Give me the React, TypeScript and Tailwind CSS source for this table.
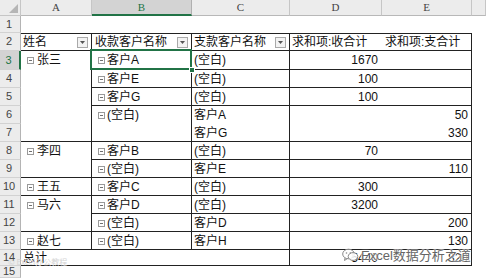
import React from "react";

const TXT = "font-['Liberation_Sans','Noto_Sans_CJK_SC',sans-serif] text-[12px] text-[#111]";

function Minus() {
  return (
    <svg width="7" height="7" viewBox="0 0 7 7" className="shrink-0">
      <rect x="0.5" y="0.5" width="6" height="6" fill="#fff" stroke="#9a9a9a" />
      <line x1="2" y1="3.5" x2="5" y2="3.5" stroke="#707070" />
    </svg>
  );
}

function Drop() {
  return (
    <span className="ml-auto mr-[3px] flex h-[11px] w-[11px] shrink-0 items-center justify-center border border-[#a9a9a9] bg-[#f3f3f3]">
      <svg width="5" height="3" viewBox="0 0 5 3">
        <path d="M0 0H5L2.5 3Z" fill="#555" />
      </svg>
    </span>
  );
}

const rowHeads = [
  { n: 1, c: "row-start-2" },
  { n: 2, c: "row-start-3" },
  { n: 3, c: "row-start-4" },
  { n: 4, c: "row-start-5" },
  { n: 5, c: "row-start-6" },
  { n: 6, c: "row-start-7" },
  { n: 7, c: "row-start-8" },
  { n: 8, c: "row-start-9" },
  { n: 9, c: "row-start-10" },
  { n: 10, c: "row-start-11" },
  { n: 11, c: "row-start-12" },
  { n: 12, c: "row-start-13" },
  { n: 13, c: "row-start-14" },
  { n: 14, c: "row-start-15" },
  { n: 15, c: "row-start-16" },
];

const colHeads = [
  { l: "A", c: "col-start-2" },
  { l: "B", c: "col-start-3", sel: true },
  { l: "C", c: "col-start-4" },
  { l: "D", c: "col-start-5" },
  { l: "E", c: "col-start-6" },
  { l: "", c: "col-start-7" },
];

const names = [
  { t: "张三", c: "row-start-4 row-span-5" },
  { t: "李四", c: "row-start-9 row-span-2" },
  { t: "王五", c: "row-start-11 row-span-1" },
  { t: "马六", c: "row-start-12 row-span-2" },
  { t: "赵七", c: "row-start-14 row-span-1" },
];

const groups = [
  { rc: "row-start-4 row-span-1", b: "客户A", c: ["(空白)"], d: ["1670"], e: [""], sel: true },
  { rc: "row-start-5 row-span-1", b: "客户E", c: ["(空白)"], d: ["100"], e: [""] },
  { rc: "row-start-6 row-span-1", b: "客户G", c: ["(空白)"], d: ["100"], e: [""] },
  { rc: "row-start-7 row-span-2", b: "(空白)", c: ["客户A", "客户G"], d: ["", ""], e: ["50", "330"] },
  { rc: "row-start-9 row-span-1", b: "客户B", c: ["(空白)"], d: ["70"], e: [""] },
  { rc: "row-start-10 row-span-1", b: "(空白)", c: ["客户E"], d: [""], e: ["110"] },
  { rc: "row-start-11 row-span-1", b: "客户C", c: ["(空白)"], d: ["300"], e: [""] },
  { rc: "row-start-12 row-span-1", b: "客户D", c: ["(空白)"], d: ["3200"], e: [""] },
  { rc: "row-start-13 row-span-1", b: "(空白)", c: ["客户D"], d: [""], e: ["200"] },
  { rc: "row-start-14 row-span-1", b: "(空白)", c: ["客户H"], d: [""], e: ["130"] },
];

export default function App() {
  return (
    <div className={`relative h-[278px] w-[486px] overflow-hidden bg-white ${TXT}`}>
      <div className="grid h-full grid-cols-[21px_71px_100px_98px_92px_90px_1fr] grid-rows-[16px_17px_18px_19px_18px_18px_18px_18px_18px_18px_18px_18px_18px_18px_16px_12px]">
        {/* corner */}
        <div className="col-start-1 row-start-1 flex items-end justify-end border-b border-r border-[#c6c6c6] bg-[#ececec] pb-[2px] pr-[2px]">
          <svg width="9" height="9" viewBox="0 0 9 9">
            <path d="M9 0V9H0Z" fill="#b5b5b5" />
          </svg>
        </div>
        {colHeads.map((h) => (
          <div
            key={h.c}
            className={`${h.c} row-start-1 flex items-center justify-center border-r font-['Liberation_Serif',serif] text-[11px] ${
              h.sel
                ? "border-r-[#b0b0b0] border-b-2 border-b-[#217346] bg-[#d3d3d3] text-[#217346]"
                : "border-r-[#c6c6c6] border-b border-b-[#b8b8b8] bg-[#ececec] text-[#444]"
            }`}
          >
            {h.l}
          </div>
        ))}
        {rowHeads.map((r) => (
          <div
            key={r.n}
            className={`col-start-1 ${r.c} flex items-center justify-center border-b border-b-[#d2d2d2] pr-[2px] font-['Liberation_Sans',sans-serif] text-[11px] ${
              r.n === 3
                ? "border-r-2 border-r-[#217346] bg-[#d3d3d3] text-[#217346]"
                : "border-r border-r-[#b4b4b4] bg-[#ececec] text-[#444]"
            }`}
          >
            {r.n}
          </div>
        ))}

        {/* header row of pivot */}
        <div className="col-start-2 row-start-3 flex items-center border-y border-r border-[#222] pl-[2px]">
          <span>姓名</span>
          <Drop />
        </div>
        <div className="col-start-3 row-start-3 flex items-center border-y border-r border-[#222] pl-[3px]">
          <span>收款客户名称</span>
          <Drop />
        </div>
        <div className="col-start-4 row-start-3 flex items-center border-y border-r border-[#222] pl-[2px]">
          <span>支款客户名称</span>
          <Drop />
        </div>
        <div className="col-start-5 row-start-3 flex items-center border-y border-[#222] pl-[2px]">
          求和项:收合计
        </div>
        <div className="col-start-6 row-start-3 flex items-center border-y border-r border-[#222] pl-[3px]">
          求和项:支合计
        </div>

        {/* names */}
        {names.map((n) => (
          <div key={n.t} className={`col-start-2 ${n.c} border-b border-r border-[#222] pl-[6px]`}>
            <div className="flex h-[18px] items-center gap-[3px]">
              <Minus />
              <span>{n.t}</span>
            </div>
          </div>
        ))}

        {groups.map((g, i) => (
          <React.Fragment key={i}>
            <div className={`col-start-3 ${g.rc} relative border-b border-r border-[#222] pl-[6px]`}>
              <div className="flex h-[18px] items-center gap-[2px]">
                <Minus />
                <span>{g.b}</span>
              </div>
              {g.sel && (
                <>
                  <div className="pointer-events-none absolute -bottom-[1px] -left-[2px] -right-[1px] -top-[2px] z-10 border-2 border-[#217346]" />
                  <div className="absolute -bottom-[4px] -right-[4px] z-20 h-[6px] w-[6px] border border-white bg-[#217346]" />
                </>
              )}
            </div>
            <div className={`col-start-4 ${g.rc} flex flex-col border-b border-r border-[#222] pl-[2px]`}>
              {g.c.map((t, j) => (
                <div key={j} className="flex flex-1 items-center">
                  {t}
                </div>
              ))}
            </div>
            <div className={`col-start-5 ${g.rc} flex flex-col border-b border-[#222] pr-[4px]`}>
              {g.d.map((t, j) => (
                <div key={j} className="flex flex-1 items-center justify-end">
                  {t}
                </div>
              ))}
            </div>
            <div className={`col-start-6 ${g.rc} flex flex-col border-b border-r border-[#222] pr-[3px]`}>
              {g.e.map((t, j) => (
                <div key={j} className="flex flex-1 items-center justify-end">
                  {t}
                </div>
              ))}
            </div>
          </React.Fragment>
        ))}

        {/* total */}
        <div className="col-span-3 col-start-2 row-start-15 flex items-center border-b border-r border-[#222] pl-[2px]">
          总计
        </div>
        <div className="col-start-5 row-start-15 flex items-center justify-end border-b border-[#222] pr-[4px]">
          5440
        </div>
        <div className="col-start-6 row-start-15 flex items-center justify-end border-b border-r border-[#222] pr-[3px]">
          820
        </div>
      </div>

      {/* watermark */}
      <div className="absolute left-[342px] top-[248px] flex items-center gap-[2px]">
        <svg width="17" height="14" viewBox="0 0 17 14">
          <ellipse cx="6.5" cy="6" rx="5.8" ry="4.8" fill="rgba(255,255,255,0.6)" stroke="#8a8a8a" />
          <path d="M3 10 L2.5 12.5 L5.5 10.5" fill="none" stroke="#8a8a8a" />
          <ellipse cx="11" cy="8.5" rx="4.8" ry="3.9" fill="rgba(255,255,255,0.85)" stroke="#8a8a8a" />
          <circle cx="4.5" cy="5" r="0.8" fill="#8a8a8a" />
          <circle cx="8.3" cy="5" r="0.8" fill="#8a8a8a" />
        </svg>
        <span className="font-['Liberation_Sans','Noto_Sans_CJK_SC',sans-serif] text-[13px] leading-none text-[#666] [text-shadow:0_0_2px_#fff,0_0_2px_#fff,0_0_1px_#fff]">
          Excel数据分析之道
        </span>
      </div>
      <div className="absolute left-[8px] top-[258px] font-['Noto_Sans_CJK_SC',sans-serif] text-[8px] leading-none text-[#d4d4d4]">
        © Excel办公教程
      </div>
    </div>
  );
}
